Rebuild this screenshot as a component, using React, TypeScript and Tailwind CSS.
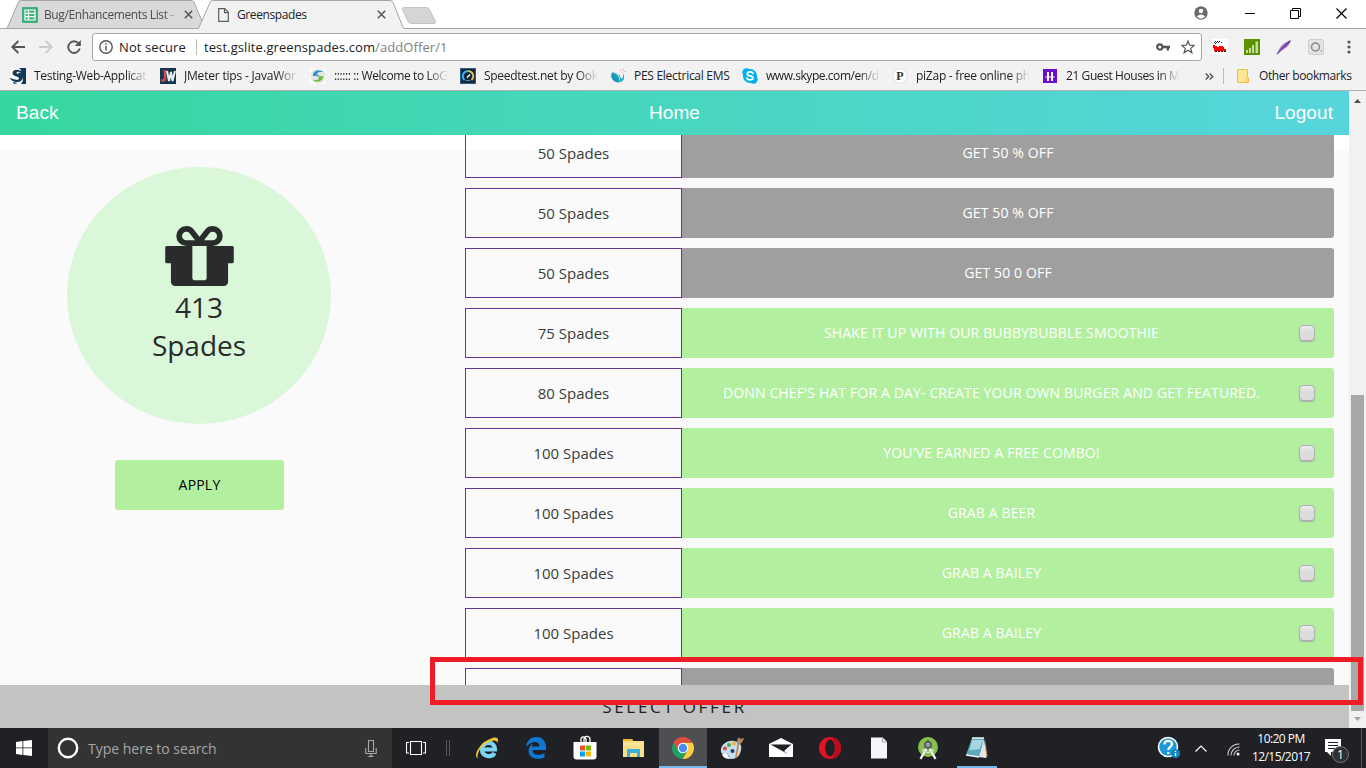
import React from "react";

const fade = "[mask-image:linear-gradient(to_right,black_82%,transparent)]";

function TestingIcon() {
  return (
    <svg width="16" height="16" viewBox="0 0 16 16">
      <rect width="16" height="16" fill="#fff" />
      <path d="M9 0h7v16h-5c3-3 2-7-1-8.500C7 6 8 4 11 4.500V2z" fill="#12395a" />
      <path d="M11.500 3.500C9 1 2.500 1 2.500 5c0 3.800 6.500 3 6.500 5.500C9 12.500 4 12 0 9.500c1 5.500 12.500 6.500 12.500 0C12.500 6 6.500 6.500 6.500 4.700c0-1.400 3-1.200 5-.2z" fill="#12395a" />
      <path d="M3 14l5 1-4 1z" fill="#12395a" />
    </svg>
  );
}

function JwIcon() {
  return (
    <svg width="16" height="16" viewBox="0 0 16 16">
      <rect width="16" height="16" fill="#17364d" />
      <path d="M5 2v8.500q0 2-2.500 2H1" fill="none" stroke="#d8463c" strokeWidth="2.500" />
      <path d="M7 3l2 10 2-9 1.500 9L15 3" fill="none" stroke="#e8edf0" strokeWidth="2" />
    </svg>
  );
}

function SwirlIcon() {
  return (
    <svg width="16" height="16" viewBox="0 0 16 16">
      <rect width="16" height="16" fill="#fafafa" />
      <circle cx="8" cy="8" r="7.500" fill="#e2e6e2" />
      <path d="M3 8C2.500 2.500 9 1 13 4c-3.500-.2-6 .2-6 1.800 0 1 1.500 1.200 3 1.700z" fill="#2f8fca" />
      <path d="M13 8c.5 5.500-6 7-10 4 3.500.2 6-.2 6-1.800 0-1-1.500-1.200-3-1.700z" fill="#6db93a" />
    </svg>
  );
}

function SpeedIcon() {
  return (
    <svg width="16" height="16" viewBox="0 0 16 16">
      <rect x=".5" y=".5" width="15" height="15" fill="#152638" stroke="#2e5f8c" />
      <path d="M4.500 12A5 5 0 0 1 8 3.200" fill="none" stroke="#38bbe8" strokeWidth="1.800" />
      <path d="M8 3.200A5 5 0 0 1 11.500 12" fill="none" stroke="#d9c766" strokeWidth="1.800" />
      <path d="M7 9.500L10 6.500" stroke="#fff" strokeWidth="1.500" />
      <path d="M5.500 12.500h5" stroke="#4a8ab8" />
    </svg>
  );
}

function PesIcon() {
  return (
    <svg width="16" height="16" viewBox="0 0 16 16" className="-ml-px">
      <path d="M2 4.500C-.5 9 3 14.500 8.500 14.500 8.500 10 4 9 2 4.500z" fill="#1593b4" />
      <path d="M2 4.500c6 0 9.500 4.500 7 10C14 13.500 15.500 9 13 5.500c.5 4-.5 5.500-2 5C10.500 7 7 4.500 2 4.500z" fill="#27a8bd" />
      <path d="M2 4.500c5 .5 8.500 5 7 10C6.500 13 3 9 2 4.500z" fill="#1a9dbb" />
      <path d="M10 2.500h1M13 1.500h1M12 4h1M14.500 3.500h1" stroke="#e79a72" />
    </svg>
  );
}

function SkypeIcon() {
  return (
    <svg width="16" height="16" viewBox="0 0 16 16">
      <circle cx="8" cy="8" r="7" fill="#00aff0" />
      <circle cx="4.500" cy="4.500" r="4.200" fill="#00aff0" />
      <circle cx="11.500" cy="11.500" r="4.200" fill="#00aff0" />
      <path d="M11 5.500C10 3.300 5.300 3.500 5.300 5.900c0 2.700 5.600 1.400 5.600 4 0 2.400-5 2.700-6.100.3" fill="none" stroke="#fff" strokeWidth="1.800" strokeLinecap="round" />
    </svg>
  );
}

function PizapIcon() {
  return (
    <span className="flex size-[14px] items-center justify-center rounded-full bg-white font-['Liberation_Serif',serif] text-[12px] leading-none font-bold text-[#333] shadow-[0_0_1px_#999]">
      P
    </span>
  );
}

function HouseIcon() {
  return (
    <svg width="14" height="16" viewBox="0 0 14 16">
      <rect y="1" width="14" height="14" fill="#6a0fd0" />
      <path d="M5 4v9M9 4v9" stroke="#fff" strokeWidth="2" />
      <path d="M2.500 9h9" stroke="#fff" strokeWidth="1" />
    </svg>
  );
}

const bookmarks = [
  { label: "Testing-Web-Applicat", icon: <TestingIcon />, box: "w-[150px]", spacing: "tracking-[-0.3px]" },
  { label: "JMeter tips - JavaWor", icon: <JwIcon />, box: "w-[150px]", spacing: "tracking-[-0.2px]" },
  { label: ":::::: :: Welcome to LoG", icon: <SwirlIcon />, box: "w-[150px]", spacing: "tracking-[-0.4px]" },
  { label: "Speedtest.net by Ook", icon: <SpeedIcon />, box: "w-[150px]", spacing: "tracking-[-0.3px]" },
  { label: "PES Electrical EMS", icon: <PesIcon />, box: "w-[132px]", spacing: "tracking-[-0.28px]", full: true },
  { label: "www.skype.com/en/d", icon: <SkypeIcon />, box: "w-[150px]", spacing: "tracking-[-0.45px]" },
  { label: "piZap - free online ph", icon: <PizapIcon />, box: "w-[150px]", spacing: "tracking-[-0.25px]" },
  { label: "21 Guest Houses in M", icon: <HouseIcon />, box: "w-[150px]", spacing: "tracking-[-0.42px]" },
];

function Cross() {
  return (
    <svg width="9" height="9" viewBox="0 0 9 9" className="shrink-0">
      <path d="M.8.8l7.400 7.400M8.200.8L.8 8.200" stroke="#5a5a5a" strokeWidth="1.600" />
    </svg>
  );
}

function TabStrip() {
  return (
    <div className="relative flex h-[29px] shrink-0 bg-white">
      <svg width="1366" height="29" className="absolute inset-0">
        <path d="M0 28.500H7L18.500 2Q19 .5 21 .5H191Q193 .5 194 2L205 28.500" fill="#d9d9d9" stroke="#a5a5a5" />
        <path d="M198.500 28.500L210 2.500Q211 .5 213 .5H390Q392 .5 393 2.500L403.500 28.500V30H198z" fill="#f2f2f2" />
        <path d="M0 28.500H198.500L210 2.500Q211 .5 213 .5H390Q392 .5 393 2.500L403.500 28.500H1366" fill="none" stroke="#a5a5a5" />
        <path d="M403.500 7.500h23q2 0 3 2l6 12q.5 2-1.500 2h-23q-2 0-3-2l-5.500-12q-.5-2 1-2z" fill="#d5d5d5" stroke="#c4c4c4" />
      </svg>
      <div className="relative flex h-[29px] w-[203px] items-center pl-[22px]">
        <svg width="16" height="16" viewBox="0 0 16 16" className="shrink-0">
          <rect width="16" height="16" rx="1" fill="#3eb17b" />
          <path d="M3 3h10v10H3zM3 6.300h10M3 9.700h10M6.500 3v10" fill="none" stroke="#fff" strokeWidth="1.200" />
        </svg>
        <span className="ml-[6px] w-[136px] overflow-hidden whitespace-nowrap tracking-[-0.38px] text-[#4c4c4c] [mask-image:linear-gradient(to_right,black_88%,transparent)]">
          Bug/Enhancements List -
        </span>
        <span className="ml-[4px]"><Cross /></span>
      </div>
      <div className="relative flex h-[29px] w-[200px] items-center pl-[15px]">
        <svg width="11" height="14" viewBox="0 0 11 14" className="shrink-0">
          <path d="M.7.7h6l3.600 3.600v9H.7zM6.500.7v4h3.800" fill="none" stroke="#5c5c5c" strokeWidth="1.200" />
        </svg>
        <span className="ml-[8px] w-[140px] tracking-[-0.4px] text-[#222]">Greenspades</span>
        <Cross />
      </div>
      <div className="relative ml-auto flex h-[28px] items-center">
        <svg width="14" height="14" viewBox="0 0 14 14" className="-mt-[2px] mr-[37px]">
          <circle cx="7" cy="7" r="6.700" fill="#6b6b6b" />
          <circle cx="7" cy="5" r="2.200" fill="#fff" />
          <path d="M2.800 10.600q4.200-4 8.400 0-4.200 4.200-8.400 0z" fill="#fff" />
        </svg>
        <svg width="10" height="12" className="mr-[35px]"><path d="M0 5.500h10" stroke="#000" /></svg>
        <svg width="11" height="11" viewBox="0 0 11 11" className="mr-[35px] -mt-[2px]">
          <path d="M.5 2.500h8v8h-8zM2.500 2.500v-2h8v8h-2" fill="none" stroke="#000" />
        </svg>
        <svg width="11" height="11" viewBox="0 0 11 11" className="mr-[19px] -mt-[2px]">
          <path d="M.5.5l10 10M10.500.5l-10 10" stroke="#000" strokeWidth="1.200" />
        </svg>
      </div>
    </div>
  );
}

function Toolbar() {
  return (
    <div className="flex h-[33px] shrink-0 items-center bg-[#f2f2f2] pt-[3px] text-[14px]">
      <svg width="14" height="14" viewBox="0 0 14 14" className="ml-[11px]">
        <path d="M14 7H1.500M7.300 1L1.300 7l6 6" fill="none" stroke="#555" strokeWidth="1.900" />
      </svg>
      <svg width="14" height="14" viewBox="0 0 14 14" className="ml-[14px]">
        <path d="M0 7h12.500M6.700 1l6 6-6 6" fill="none" stroke="#ccc" strokeWidth="1.900" />
      </svg>
      <svg width="14" height="14" viewBox="0 0 14 14" className="ml-[14px]">
        <path d="M11.600 3.500A5.800 5.800 0 1 0 12.700 8.500" fill="none" stroke="#555" strokeWidth="1.900" />
        <path d="M13.800 0v6h-6z" fill="#555" />
      </svg>
      <div className="ml-[11px] flex h-[28px] w-[1110px] items-center rounded-[3px] border border-[#a8a8a8] bg-white">
        <svg width="14" height="14" viewBox="0 0 14 14" className="ml-[6px]">
          <circle cx="7" cy="7" r="6.200" fill="none" stroke="#555" strokeWidth="1.400" />
          <path d="M7 6v4.500M7 3.200v1.500" stroke="#555" strokeWidth="1.500" />
        </svg>
        <span className="ml-[6px] w-[68px] whitespace-nowrap pt-px text-[13px] tracking-[0.1px] text-[#222]">Not secure</span>
        <span className="ml-[9px] h-[16px] w-px bg-[#bbb]" />
        <span className="ml-[7px] whitespace-nowrap pt-px text-[13px] tracking-[0.09px] text-[#222]">
          test.gslite.greenspades.com<span className="text-[#808080]">/addOffer/1</span>
        </span>
        <svg width="14" height="8" viewBox="0 0 14 8" className="ml-auto mr-[11px]">
          <circle cx="3.800" cy="4" r="2.600" fill="none" stroke="#555" strokeWidth="2.200" />
          <path d="M6 4h8M11.800 4v3.500" stroke="#555" strokeWidth="2.400" />
        </svg>
        <svg width="14" height="14" viewBox="0 0 14 14" className="mr-[6px]">
          <path d="M7 1l1.700 4.200 4.500.3-3.500 2.900 1.200 4.400L7 10.300l-3.900 2.500 1.200-4.400L.8 5.500l4.500-.3z" fill="none" stroke="#555" strokeWidth="1.200" />
        </svg>
      </div>
      <svg width="16" height="16" viewBox="0 0 16 16" className="ml-[10px]" shapeRendering="crispEdges">
        <rect width="16" height="16" fill="#fff" />
        <path d="M3 2h1v1H3zM5 2h1v1H5zM7 2h1v1H7zM2 3h1v1H2zM4 3h1v1H4zM6 3h1v1H6zM9 3h1v1H9zM3 4h1v1H3z" fill="#222" />
        <path d="M1 6h2v1h8v1h1v2h2v2H2V9H1z" fill="#f00" />
        <path d="M5 7h2v1H5z" fill="#fff" />
        <path d="M3 12h2v1H3zM6 12h2v1H6zM9 12h2v1H9zM12 12h2v1h-2z" fill="#400" />
      </svg>
      <svg width="16" height="16" viewBox="0 0 16 16" className="ml-[16px]">
        <rect width="16" height="16" fill="#5b9200" />
        <path d="M2 14v-3h2v3zM5 14V9h2v5zM8 14V6h2v8zM11.500 14V2.500H14V14z" fill="#c5dda4" />
      </svg>
      <svg width="16" height="16" viewBox="0 0 16 16" className="ml-[16px]">
        <path d="M2 13C4 7 9 3 15 1c-1 4-4 8-10 10.500z" fill="#9670bf" />
        <path d="M1 15L14 2" stroke="#6a3d9a" strokeWidth="1.200" />
      </svg>
      <svg width="16" height="16" viewBox="0 0 16 16" className="ml-[16px]">
        <rect x=".5" y=".5" width="15" height="15" rx="2" fill="#e4e4e4" stroke="#ccc" />
        <circle cx="7.500" cy="8" r="4" fill="none" stroke="#888" strokeWidth="1.500" />
        <path d="M12.500 12h1.500" stroke="#888" />
      </svg>
      <svg width="4" height="14" viewBox="0 0 4 14" className="ml-[23px]">
        <circle cx="2" cy="2" r="1.600" fill="#555" /><circle cx="2" cy="7" r="1.600" fill="#555" /><circle cx="2" cy="12" r="1.600" fill="#555" />
      </svg>
    </div>
  );
}

function BookmarkBar() {
  return (
    <div className="flex h-[29px] shrink-0 items-center border-b border-[#b0b0b0] bg-[#f2f2f2] pl-[10px]">
      {bookmarks.map((b) => (
        <div key={b.label} className={`${b.box} flex shrink-0 items-center`}>
          <span className="flex w-[16px] shrink-0 justify-center">{b.icon}</span>
          <span className={`ml-[8px] w-[114px] overflow-hidden whitespace-nowrap text-[#222] ${b.spacing} ${b.full ? "" : fade}`}>{b.label}</span>
        </div>
      ))}
      <svg width="9" height="7" viewBox="0 0 9 7" className="ml-[13px]">
        <path d="M.7.5l3 3-3 3M4.700.5l3 3-3 3" fill="none" stroke="#555" strokeWidth="1.500" />
      </svg>
      <span className="ml-[9px] h-[16px] w-px bg-[#bbb]" />
      <svg width="12" height="14" viewBox="0 0 12 14" className="ml-[13px]">
        <path d="M.5.5h10v8.500h1V13.500H.5z" fill="#ffe695" stroke="#e8c04c" />
        <path d="M9.500 9v4" stroke="#e8c04c" />
      </svg>
      <span className="ml-[10px] whitespace-nowrap tracking-[-0.4px] text-[#222]">Other bookmarks</span>
    </div>
  );
}

const offers = [
  { cost: 50, text: "GET 50 % OFF", open: false },
  { cost: 50, text: "GET 50 % OFF", open: false },
  { cost: 50, text: "GET 50 0 OFF", open: false },
  { cost: 75, text: "SHAKE IT UP WITH OUR BUBBYBUBBLE SMOOTHIE", open: true },
  { cost: 80, text: "DONN CHEF'S HAT FOR A DAY- CREATE YOUR OWN BURGER AND GET FEATURED.", open: true },
  { cost: 100, text: "YOU'VE EARNED A FREE COMBO!", open: true },
  { cost: 100, text: "GRAB A BEER", open: true },
  { cost: 100, text: "GRAB A BAILEY", open: true },
  { cost: 100, text: "GRAB A BAILEY", open: true },
  { cost: null, text: "", open: false },
];

function OfferRow({ cost, text, open }: { cost: number | null; text: string; open: boolean }) {
  return (
    <div className="flex h-[50px] shrink-0">
      <div className="flex w-[217px] items-center justify-center border border-[#663399] text-[15px] text-[#3a3c3e]">
        {cost !== null && <span>{cost} Spades</span>}
      </div>
      <div className={`flex flex-1 items-center rounded-r-[3px] text-[14px] tracking-[0.14px] text-white ${open ? "bg-[#b2f0a0]" : "bg-[#9f9f9f]"}`}>
        <span className={`flex-1 pb-[2px] text-center whitespace-nowrap ${open ? "pl-[2px]" : ""}`}>{text}</span>
        {open && (
          <span className="mr-[19px] size-[16px] rounded-[4px] border border-[#b0b0b0] bg-linear-to-b from-[#eee] to-[#dcdcdc] to-40% shadow-[0_1px_1px_#aaa]" />
        )}
      </div>
    </div>
  );
}

function Page() {
  return (
    <div className="flex h-[637px] shrink-0">
      <div className="flex w-[1349px] flex-col font-['Open_Sans',sans-serif]">
        <header className="flex h-[44px] shrink-0 items-center bg-linear-to-r from-[#36d7a0] to-[#57d5dc] px-[16px] font-['Liberation_Sans',sans-serif] text-[19px] tracking-[0.08px] text-white">
          <span className="flex-1">Back</span>
          <span>Home</span>
          <span className="flex-1 text-right">Logout</span>
        </header>
        <main className="flex h-[550px] shrink-0 overflow-hidden bg-[linear-gradient(#ffffff_15px,#fafafa_15px)]">
          <section className="flex w-[398px] flex-col items-center pt-[32px]">
            <div className="flex h-[257px] w-[264px] shrink-0 flex-col items-center rounded-[50%] bg-[#daf7da] pt-[59px] text-[28px] leading-[38px] text-[#292b2c]">
              <svg width="69" height="60" viewBox="0 192 1536 1344" className="ml-px shrink-0" fill="#292b2c">
                <path fillRule="evenodd" d="M928 1356v-716h-320v716q0 25 18 38.500t46 13.500h192q28 0 46-13.500t18-38.500zM472 512h195l-126-161q-26-31-69-31-40 0-68 28t-28 68 28 68 68 28zM1160 416q0-40-28-68t-68-28q-43 0-69 31l-125 161h194q40 0 68-28t28-68zM1536 672v320q0 14-9 23t-23 9h-96v416q0 40-28 68t-68 28h-1088q-40 0-68-28t-28-68v-416h-96q-14 0-23-9t-9-23v-320q0-14 9-23t23-9h440q-93 0-158.500-65.500t-65.500-158.500 65.500-158.500 158.500-65.500q107 0 168 77l128 165 128-165q61-77 168-77 93 0 158.500 65.500t65.500 158.500-65.500 158.500-158.500 65.500h440q14 0 23 9t9 23z" />
              </svg>
              <span className="mt-[2px]">413</span>
              <span>Spades</span>
            </div>
            <button className="mt-[36px] ml-px h-[50px] w-[169px] shrink-0 rounded-[3px] bg-[#b2f0a0] pb-[2px] text-[14px] tracking-[0.2px] text-black">APPLY</button>
          </section>
          <section className="-mt-[7px] ml-[67px] flex w-[869px] flex-col gap-[10px]">
            {offers.map((o, i) => (
              <OfferRow key={i} {...o} />
            ))}
          </section>
        </main>
        <footer className="flex h-[43px] shrink-0 items-center justify-center bg-[#c3c3c3] text-[17px] font-medium tracking-[2.7px] text-[#1f2122]">
          SELECT OFFER
        </footer>
      </div>
      <div className="flex w-[17px] flex-col items-center bg-[#f1f1f1]">
        <svg width="7" height="4" className="mt-[8px] shrink-0"><path d="M0 4L3.500 0 7 4z" fill="#505050" /></svg>
        <div className="mt-[292px] h-[316px] w-[13px] shrink-0 bg-[#a8a8a8]" />
        <svg width="7" height="4" className="mt-[6px] shrink-0"><path d="M0 0L3.500 4 7 0z" fill="#a3a3a3" /></svg>
      </div>
    </div>
  );
}

const apps: { id: string; icon: React.ReactNode }[] = [
  {
    id: "explorer",
    icon: (
      <svg width="24" height="24" viewBox="0 0 24 24">
        <path d="M7 13.500h13C20.500 5 7.500 4.500 7 13.500 7 21 17 22 19.500 17" fill="none" stroke="#7bd5f5" strokeWidth="4.200" />
        <path d="M3 22C-2 21 3 9 13 4c5-3 9-3.500 10-.5 0 2-.5 3-1 3.500C22 1 8 7 4.500 14c-2 4-2.500 7-1.500 8z" fill="#f5c62c" />
      </svg>
    ),
  },
  {
    id: "edge",
    icon: (
      <svg width="24" height="24" viewBox="0 0 24 24">
        <path d="M2 11C3 4 7 1 12.500 1 19 1 22 6 22 11v3H8.500c0 6 8 5.500 12 3v4.500C15 24 5 23.500 4.500 15c0-3.500 2-6 4.500-7.500-.5.800-1 2-1 3h7.500c0-7-9-5-13.500.5z" fill="#0f78d4" />
      </svg>
    ),
  },
  {
    id: "store",
    icon: (
      <svg width="24" height="26" viewBox="0 0 24 26">
        <path d="M8 7V4.500C8 1 12 1 13 4v3M11 7V4c1-4 6-3 6 .5V7" fill="none" stroke="#fff" strokeWidth="1.300" />
        <path d="M.5 7h23v14.500q0 3-3 3h-17q-3 0-3-3z" fill="#fff" />
        <path d="M7 10.500h5v5H7z" fill="#f04f22" /><path d="M13 10.500h5v5h-5z" fill="#7fba00" />
        <path d="M7 16.500h5v5H7z" fill="#00a4ef" /><path d="M13 16.500h5v5h-5z" fill="#ffb900" />
      </svg>
    ),
  },
  {
    id: "files",
    icon: (
      <svg width="24" height="20" viewBox="0 0 24 20">
        <path d="M1 1h9l1 2h11v16H1z" fill="#fbdf87" />
        <path d="M1 1h9l1 2H1z" fill="#efb928" />
        <path d="M5 11h13v8h-3v-4H8v4H5z" fill="#35b0e0" />
        <path d="M2 6h19" stroke="#fff0ba" />
      </svg>
    ),
  },
  {
    id: "chrome",
    icon: (
      <svg width="24" height="24" viewBox="0 0 24 24">
        <path d="M2.500 6.500A11 11 0 0 0 11.500 23L16.500 14.500 12 12z" fill="#1ba260" />
        <path d="M21.500 6.500A11 11 0 0 1 11.500 23L16.800 14.500 12 6.500z" fill="#ffcd42" />
        <path d="M2.500 6.500A11 11 0 0 1 21.500 6.500H12L7.300 14.500z" fill="#de4d3d" />
        <circle cx="12" cy="12" r="5.300" fill="#fff" /><circle cx="12" cy="12" r="4.200" fill="#4a8af4" />
      </svg>
    ),
  },
  {
    id: "paint",
    icon: (
      <svg width="24" height="24" viewBox="0 0 24 24">
        <path d="M1 16C0 8 8 4 14 5c7 1 8 5 7 9-1 6-5 9-9 9-5 0-2-4-5-5s-5 1-6-2z" fill="#c3def0" />
        <path d="M2 18c2-1 5-1 6 1s0 3 3 4c-5 0-8-1-9-5z" fill="#fff" />
        <circle cx="5" cy="12.500" r="2" fill="#d94c38" /><circle cx="9" cy="9" r="2" fill="#4eac3a" />
        <circle cx="14" cy="7.500" r="2" fill="#f0b43c" /><circle cx="12.500" cy="15" r="2" fill="#1c3d66" />
        <path d="M15 22L17.500 8l2-.5L16.500 22z" fill="#d8823b" />
        <path d="M17 8c0-3 0-5 2-7l1 2 4-1c-1 3-2 5-4.500 6.500z" fill="#b98a62" />
      </svg>
    ),
  },
  {
    id: "mail",
    icon: (
      <svg width="24" height="22" viewBox="0 0 24 22">
        <path d="M0 7L12 1l12 6v13H0z" fill="#fff" />
        <path d="M1.500 7.500h21L15 14l4 3-7.500-4z" fill="#202124" />
      </svg>
    ),
  },
  {
    id: "opera",
    icon: (
      <svg width="24" height="24" viewBox="0 0 24 24">
        <circle cx="12" cy="12" r="11" fill="#e41225" />
        <path d="M12 1a11 11 0 0 1 0 22c7-3 7-19 0-22z" fill="#b80d1c" />
        <ellipse cx="12" cy="12" rx="4.800" ry="8.500" fill="#202124" />
      </svg>
    ),
  },
  {
    id: "document",
    icon: (
      <svg width="18" height="24" viewBox="0 0 18 24">
        <path d="M1 1.500h12l4 4v17H1z" fill="#f5f6f7" />
        <path d="M12.500 1.500v4.500H17z" fill="#fff" stroke="#8a8d90" strokeWidth=".8" />
      </svg>
    ),
  },
  {
    id: "android",
    icon: (
      <svg width="24" height="24" viewBox="0 0 24 24">
        <circle cx="12" cy="11" r="10" fill="#86bf4b" />
        <path d="M12 9.500L4.500 23M12 9.500L19.500 23" stroke="#f1f1f1" strokeWidth="2.400" />
        <path d="M6 13.500q6 6 12 0" fill="none" stroke="#ddd" strokeWidth="1.600" />
        <path d="M12 4v3" stroke="#555" strokeWidth="2" /><circle cx="12" cy="9" r="3.200" fill="#8e9aa0" stroke="#4f565a" strokeWidth="1.600" />
      </svg>
    ),
  },
  {
    id: "notepad",
    icon: (
      <svg width="24" height="24" viewBox="0 0 24 24">
        <path d="M20 3l2.500 17-3 2z" fill="#bf914f" />
        <path d="M19 2l2.500 20-8-1z" fill="#dfe7ea" />
        <path d="M7 2h12l-5 19L1 19z" fill="#5fa9bb" />
        <path d="M7 4h11.500l-4 9-10 1.500z" fill="#a5d5dd" />
        <path d="M7 2h12M1 19l13 2" stroke="#edf5f7" strokeWidth="1.600" />
      </svg>
    ),
  },
];

function Taskbar() {
  return (
    <div className="flex h-[40px] shrink-0 items-center bg-[#202124] font-['Open_Sans',sans-serif]">
      <div className="flex h-full w-[48px] items-center justify-center">
        <svg width="16" height="16" viewBox="0 0 16 16" fill="#fff">
          <path d="M0 2l6.500-1v6.500H0zM7.300 1L16 0v7.500H7.300zM0 8.300h6.500V15L0 14zM7.300 8.300H16V16l-8.700-1z" />
        </svg>
      </div>
      <div className="flex h-full w-[344px] items-center bg-[#333333]">
        <svg width="22" height="22" viewBox="0 0 22 22" className="ml-[9px]">
          <circle cx="11" cy="11" r="9.200" fill="none" stroke="#fff" strokeWidth="2.400" />
        </svg>
        <span className="ml-[9px] text-[14px] tracking-[-0.01px] whitespace-nowrap text-[#a6a6a6]">Type here to search</span>
        <svg width="12" height="17" viewBox="0 0 12 17" className="mr-[15px] ml-auto">
          <path d="M3.500.5h5v11h-5zM.8 8v5.500h10.400V8M6 13.500v3M3.500 16.400h5" fill="none" stroke="#aaa" strokeWidth="1.100" />
        </svg>
      </div>
      <svg width="20" height="16" viewBox="0 0 20 16" className="ml-[14px]">
        <path d="M4.500 1.500h11v13h-11zM3 2.500H.5v10.500H3M17 2.500h2.500v10.500H17" fill="none" stroke="#fff" strokeWidth="1.100" />
      </svg>
      <svg width="6" height="16" className="ml-[20px]"><path d="M.5 0v16M3.500 0v16" stroke="#555" /></svg>
      <div className="ml-[10px] flex h-full">
        {apps.map((a) => (
          <div
            key={a.id}
            className={`flex h-full items-center justify-center ${a.id === "chrome" ? "ml-px w-[48px] border-b-2 border-[#76b9ed] bg-[#4d4e50] pt-[2px]" : "w-[49px]"} ${a.id === "notepad" ? "bg-[linear-gradient(#76b9ed,#76b9ed)] bg-[length:40px_2px] bg-[position:5px_38px] bg-no-repeat" : ""}`}
          >
            {a.icon}
          </div>
        ))}
      </div>
      <div className="ml-auto flex h-full items-center">
        <svg width="24" height="24" viewBox="0 0 24 24" className="mr-[14px]">
          <circle cx="11" cy="11" r="9.500" fill="#1b9ad6" stroke="#fff" strokeWidth="1.600" />
          <path d="M7.500 8.500c0-5 7.500-4.500 7.500-.5 0 2.700-3.700 3-3.700 6M11.300 16v2" fill="none" stroke="#fff" strokeWidth="2.300" />
          <circle cx="18.500" cy="17.500" r="4.500" fill="#1386c2" /><path d="M18.500 15v1M18.500 17v3" stroke="#fff" strokeWidth="1.300" />
        </svg>
        <svg width="12" height="7" viewBox="0 0 12 7" className="mr-[20px]"><path d="M.5 6.500l5.500-5.500 5.500 5.500" fill="none" stroke="#fff" strokeWidth="1.200" /></svg>
        <svg width="13" height="13" viewBox="0 0 13 13" className="mr-[11px] mt-[2px]">
          <path d="M1 12.500A11 11 0 0 1 12.500 1M4 12.500A8.500 8.500 0 0 1 12.500 4M7 12.500A5.500 5.500 0 0 1 12.500 7" fill="none" stroke="#ccc" strokeWidth="1.100" />
          <circle cx="11" cy="11" r="1.500" fill="#fff" />
        </svg>
        <div className="mr-[14px] flex w-[60px] flex-col items-center text-[12px] leading-[18px] tracking-[-0.55px] whitespace-nowrap text-white">
          <span className="-mt-[1px]">10:20 PM</span>
          <span>12/15/2017</span>
        </div>
        <svg width="24" height="26" viewBox="0 0 24 26" className="mr-[12px] mt-[8px]">
          <path d="M0 0h16v13H6v4l-4-4H0z" fill="#fff" />
          <path d="M3 3.500h10M3 6.500h10M3 9.500h10" stroke="#202124" />
          <circle cx="15.500" cy="15.500" r="8" fill="#2f3032" stroke="#777" />
          <text x="15.500" y="20" fill="#fff" fontSize="12" textAnchor="middle">1</text>
        </svg>
        <span className="mr-[4px] h-full w-px bg-[#55575a]" />
      </div>
    </div>
  );
}

export default function App() {
  return (
    <div className="relative flex h-[768px] w-[1366px] flex-col overflow-hidden bg-white font-['Open_Sans',sans-serif] text-[12px]">
      <TabStrip />
      <Toolbar />
      <BookmarkBar />
      <Page />
      <Taskbar />
      <div className="pointer-events-none absolute top-[657px] left-[430px] h-[48px] w-[933px] border-[5px] border-[#ee1c25]" />
    </div>
  );
}
